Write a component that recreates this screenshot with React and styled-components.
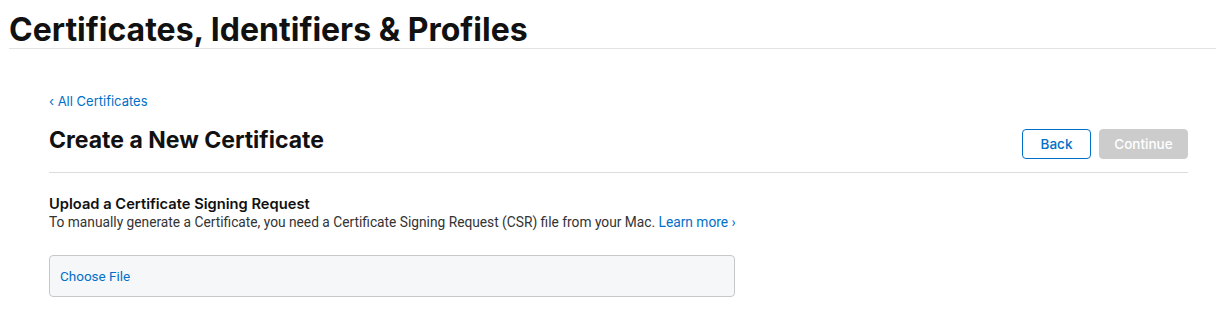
import React from "react";
import styled, { createGlobalStyle } from "styled-components";

const Global = createGlobalStyle`
  body {
    margin: 0;
    background: #fff;
    font-family: Inter, "Liberation Sans", sans-serif;
    color: #111;
  }
`;

function App() {
  return (
    <Page>
      <Global />
      <Header>
        <h1>Certificates, Identifiers &amp; Profiles</h1>
      </Header>
      <Content>
        <BackLink href="#">‹ All Certificates</BackLink>
        <TitleRow>
          <h2>Create a New Certificate</h2>
          <Buttongroup>
            <Button $width={69}>Back</Button>
            <Button $width={89} disabled>Continue</Button>
          </Buttongroup>
        </TitleRow>
        <Section>
          <h3>Upload a Certificate Signing Request</h3>
          <p>
            To manually generate a Certificate, you need a Certificate Signing Request (CSR) file from your Mac.{" "}
            <a href="#">Learn more ›</a>
          </p>
        </Section>
        <FileBox>Choose File</FileBox>
      </Content>
    </Page>
  );
}

export default App;

const Page = styled.div`
  width: 1216px;
`;

const Header = styled.div`
  margin-left: 9px;
  border-bottom: 1px solid #e2e2e2;
  h1 {
    margin: 0;
    padding-top: 12px;
    font-size: 32px;
    line-height: 36px;
    font-weight: 700;
    color: #111;
  }
`;

const Content = styled.div`
  padding: 44px 28px 0 49px;
`;

const BackLink = styled.a`
  display: block;
  font-size: 13px;
  line-height: 16px;
  color: #0070c9;
  text-decoration: none;
`;

const TitleRow = styled.div`
  display: flex;
  justify-content: space-between;
  align-items: flex-start;
  padding: 11px 0 13px;
  border-bottom: 1px solid #dcdcdc;
  h2 {
    margin: 5px 0 0;
    font-size: 23px;
    line-height: 30px;
    font-weight: 700;
    color: #111;
  }
`;

const Buttongroup = styled.div`
  display: flex;
  column-gap: 8px;
  padding-top: 9px;
`;

const Button = styled.button`
  width: ${p => p.$width}px;
  height: 30px;
  padding: 0;
  border-radius: 4px;
  font-family: Inter, "Liberation Sans", sans-serif;
  font-size: 13.5px;
  font-weight: 500;
  border: 1px solid #0070c9;
  background: #fff;
  color: #0070c9;
  &:disabled {
    border-color: #ccc;
    background: #ccc;
    color: #fff;
  }
`;

const Section = styled.div`
  padding-top: 22px;
  h3 {
    margin: 0;
    font-size: 14.7px;
    line-height: 18px;
    font-weight: 600;
    color: #111;
  }
  p {
    margin: 0;
    font-size: 13.75px;
    line-height: 18px;
    color: #333;
    font-family: Roboto, "Liberation Sans", sans-serif;
    a {
      color: #0070c9;
      text-decoration: none;
    }
  }
`;

const FileBox = styled.div`
  margin-top: 24px;
  height: 40px;
  display: flex;
  align-items: center;
  padding-left: 10px;
  width: 674px;
  border: 1px solid #c8c8c8;
  border-radius: 4px;
  background: #f6f7f9;
  color: #0070c9;
  font-family: Roboto, "Liberation Sans", sans-serif;
  font-size: 13.5px;
`;
